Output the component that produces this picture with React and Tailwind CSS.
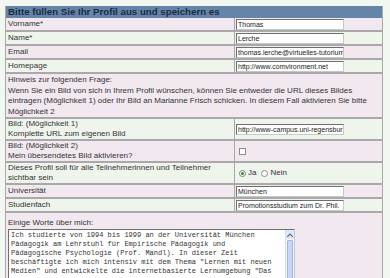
import React from 'react';

const Field = ({ value }) => (
  <div className="h-[11px] w-[108px] overflow-hidden whitespace-nowrap border border-[#6f6f6f] border-r-[#c8c8c8] border-b-[#c8c8c8] bg-white pl-[1px] text-[7px] leading-[9px] text-[#222]">
    {value}
  </div>
);

const Row = ({ bg, label, children, tall }) => (
  <div className={`flex border-b-2 border-[#a9a9a9] ${bg}`}>
    <div className={`w-[229px] shrink-0 border-r border-[#a9a9a9] px-[2px] ${tall ? 'py-0 leading-[10px]' : 'py-[1px]'}`}>{label}</div>
    <div className="flex flex-1 items-center pl-[1px]">{children}</div>
  </div>
);

export default function ProfilForm() {
  const pink = 'bg-[#f1e9ef]';
  const green = 'bg-[#eff5ed]';

  return (
    <div className="h-[278px] w-[390px] overflow-hidden bg-[#f3f7f1] pt-[6px] font-['Liberation_Sans',Arial,sans-serif] text-[8px] leading-[10px] text-[#333]">
      <div className="ml-[5px] w-[378px] border-x border-[#a9a9a9]">
        {/* Kopfzeile */}
        <div className="h-[12px] bg-[#6584a7] px-[2px] text-[9.7px] font-bold leading-[12px] text-[#1b2b47]">
          Bitte füllen Sie Ihr Profil aus und speichern es
        </div>

        <Row bg={pink} label="Vorname*"><Field value="Thomas" /></Row>
        <Row bg={green} label="Name*"><Field value="Lerche" /></Row>
        <Row bg={pink} label="Email"><Field value="thomas.lerche@virtuelles-tutorium" /></Row>
        <Row bg={green} label="Homepage"><Field value="http://www.comvironment.net" /></Row>

        <div className={`border-b-2 border-[#a9a9a9] px-[2px] pt-[1px] ${pink} whitespace-nowrap leading-[10.5px]`}>
          Hinweis zur folgenden Frage:<br />
          Wenn Sie ein Bild von sich in Ihrem Profil wünschen, können Sie entweder die URL dieses Bildes<br />
          eintragen (Möglichkeit 1) oder Ihr Bild an Marianne Frisch schicken. In diesem Fall aktivieren Sie bitte<br />
          Möglichkeit 2
        </div>

        <Row bg={green} tall label={<>Bild: (Möglichkeit 1)<br />Komplette URL zum eigenen Bild</>}>
          <Field value="http://www-campus.uni-regensbur" />
        </Row>
        <Row bg={pink} tall label={<>Bild: (Möglichkeit 2)<br />Mein übersendetes Bild aktivieren?</>}>
          <div className="ml-[3px] h-[7px] w-[7px] border border-[#8a8a8a] bg-white" />
        </Row>
        <Row bg={green} tall label={<>Dieses Profil soll für alle Teilnehmerinnen und Teilnehmer<br />sichtbar sein</>}>
          <div className="ml-[3px] flex items-center gap-[2px] text-[8px]">
            <span className="flex h-[7px] w-[7px] items-center justify-center rounded-full border border-[#6d8a6a] bg-white">
              <span className="h-[3px] w-[3px] rounded-full bg-[#3f7a3a]" />
            </span>
            <span>Ja</span>
            <span className="ml-[3px] h-[7px] w-[7px] rounded-full border border-[#8a8a8a] bg-white" />
            <span>Nein</span>
          </div>
        </Row>
        <Row bg={pink} label="Universität"><Field value="München" /></Row>
        <Row bg={green} label="Studienfach"><Field value="Promotionsstudium zum Dr. Phil." /></Row>

        {/* Freitext */}
        <div className={`${pink} px-[2px] pb-[10px] pt-[5px]`}>
          <div>Einige Worte über mich:</div>
          <div className="relative mt-[1px] h-[70px] w-[287px] overflow-hidden border border-[#6f6f6f] border-r-[#c8c8c8] bg-white">
            <div className="whitespace-pre py-[1px] pl-[2px] font-['Liberation_Mono','Courier_New',monospace] text-[7px] leading-[9px] text-[#333]">
              {`Ich studierte von 1994 bis 1999 an der Universität München
Pädagogik am Lehrstuhl für Empirische Pädagogik und
Pädagogische Psychologie (Prof. Mandl). In dieser Zeit
beschäftigte ich mich intensiv mit dem Thema "Lernen mit neuen
Medien" und entwickelte die internetbasierte Lernumgebung "Das`}
            </div>
            <div className="absolute right-0 top-0 h-full w-[9px] border-l border-[#d6deea] bg-[#f4f6fa]">
              <div className="flex h-[9px] items-center justify-center bg-[#dfe7f5]">
                <svg width="6" height="4" viewBox="0 0 6 4"><path d="M0 4 L3 1 L6 4" fill="none" stroke="#4c6ea8" strokeWidth="1.2" /></svg>
              </div>
              <div className="mx-[1px] mt-[1px] h-[60px] rounded-[1px] border border-[#9fb6de] bg-[#c8d8f4]" />
            </div>
          </div>
        </div>
      </div>
    </div>
  );
}
